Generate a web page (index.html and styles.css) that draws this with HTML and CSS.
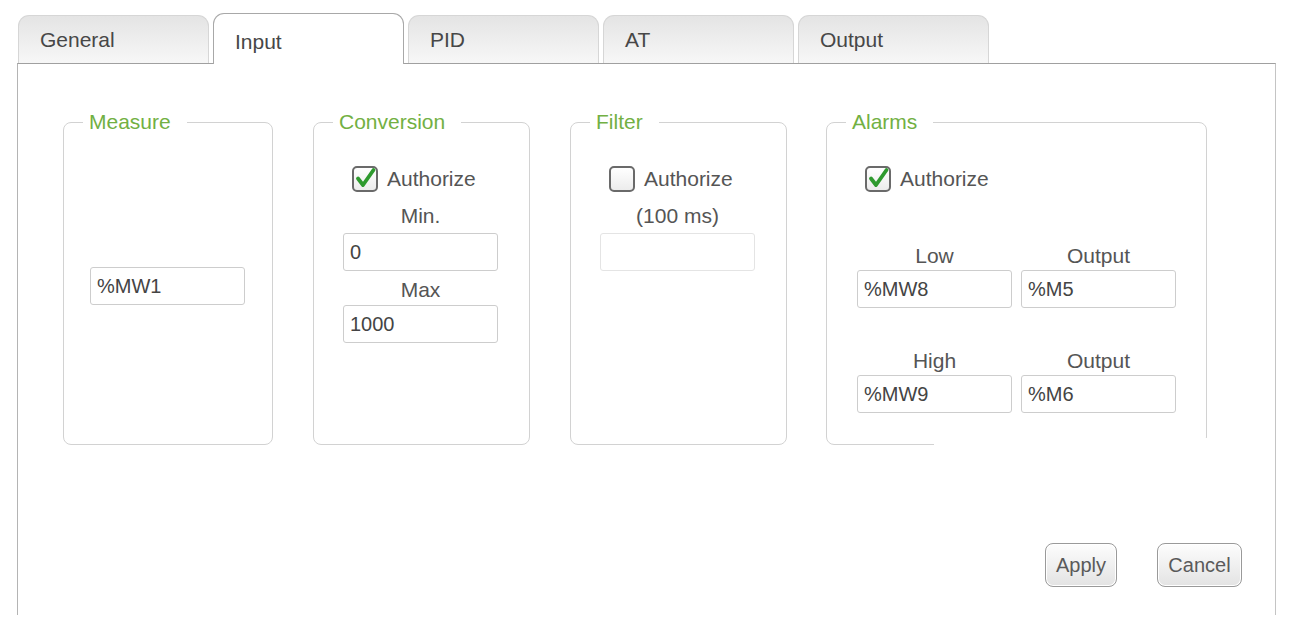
FILE: index.html
```html
<!DOCTYPE html>
<html>
<head>
<meta charset="utf-8">
<link rel="stylesheet" href="styles.css">
</head>
<body>
<div class="tabs">
  <div class="tab">General</div>
  <div class="tab active">Input</div>
  <div class="tab">PID</div>
  <div class="tab">AT</div>
  <div class="tab">Output</div>
</div>
<div class="panel">
  <div class="groups">
    <fieldset class="group measure">
      <legend>Measure</legend>
      <input class="field m-field" type="text" value="%MW1">
    </fieldset>
    <fieldset class="group conv">
      <legend>Conversion</legend>
      <label class="check-row">
        <span class="check on"><svg viewBox="0 0 26 26" width="26" height="26"><path d="M6 12.5 L11 19 L21.5 4" fill="none" stroke="#2e9a2e" stroke-width="3.8" stroke-linecap="round" stroke-linejoin="round"/></svg></span>
        <span>Authorize</span>
      </label>
      <div class="col">
        <div class="lbl lbl-first">Min.</div>
        <input class="field" type="text" value="0">
        <div class="lbl lbl-second">Max</div>
        <input class="field" type="text" value="1000">
      </div>
    </fieldset>
    <fieldset class="group filter">
      <legend>Filter</legend>
      <label class="check-row">
        <span class="check"></span>
        <span>Authorize</span>
      </label>
      <div class="col">
        <div class="lbl lbl-first">(100 ms)</div>
        <input class="field disabled" type="text" value="">
      </div>
    </fieldset>
    <fieldset class="group alarms">
      <legend>Alarms</legend>
      <label class="check-row">
        <span class="check on"><svg viewBox="0 0 26 26" width="26" height="26"><path d="M6 12.5 L11 19 L21.5 4" fill="none" stroke="#2e9a2e" stroke-width="3.8" stroke-linecap="round" stroke-linejoin="round"/></svg></span>
        <span>Authorize</span>
      </label>
      <div class="alarm-grid row1">
        <div class="lbl">Low</div>
        <div class="lbl">Output</div>
        <input class="field" type="text" value="%MW8">
        <input class="field" type="text" value="%M5">
      </div>
      <div class="alarm-grid row2">
        <div class="lbl">High</div>
        <div class="lbl">Output</div>
        <input class="field" type="text" value="%MW9">
        <input class="field" type="text" value="%M6">
      </div>
      <div class="mask"></div>
    </fieldset>
  </div>
  <div class="footer">
    <button class="btn apply">Apply</button>
    <button class="btn cancel">Cancel</button>
  </div>
</div>
</body>
</html>
```
FILE: styles.css
```css
html, body {
  margin: 0;
  padding: 0;
  background: #ffffff;
}
body {
  font-family: "Liberation Sans", Arial, sans-serif;
  color: #555555;
  font-size: 21px;
}
.tabs {
  display: flex;
  gap: 4px;
  padding-left: 18px;
  padding-top: 15px;
  height: 63px;
  box-sizing: border-box;
  align-items: flex-end;
  position: relative;
  z-index: 2;
}
.tab {
  width: 191px;
  height: 48px;
  box-sizing: border-box;
  border: 1px solid #d6d6d6;
  border-bottom: none;
  border-radius: 11px 11px 0 0;
  background: linear-gradient(#e4e4e4, #f7f7f7);
  color: #474747;
  padding-left: 21px;
  padding-top: 12px;
  line-height: 24px;
}
.tab.active {
  height: 51px;
  margin-bottom: -1px;
  background: #ffffff;
  border-color: #a8a8a8;
  padding-top: 16px;
}
.panel {
  margin-left: 17px;
  width: 1259px;
  height: 552px;
  box-sizing: border-box;
  border: 1px solid #a0a0a0;
  border-left-color: #b4b4b4;
  border-right-color: #c4c4c4;
  border-bottom: none;
  position: relative;
  z-index: 1;
}
.groups {
  display: flex;
  padding-top: 46px;
  padding-left: 45px;
}
.group {
  margin: 0 40px 0 0;
  padding: 0;
  border: 1px solid #d2d2d2;
  border-radius: 8px;
  height: 335px;
  box-sizing: border-box;
  display: flex;
  flex-direction: column;
  position: relative;
  min-width: 0;
}
.group legend {
  margin-left: 19px;
  padding: 0 16px 0 6px;
  color: #72b043;
  line-height: 24px;
  font-size: 21px;
}
.measure { width: 210px; }
.conv { width: 217px; }
.filter { width: 217px; margin-right: 39px; }
.alarms { width: 381px; margin-right: 0; }

.field {
  width: 155px;
  height: 38px;
  box-sizing: border-box;
  border: 1px solid #cdcdcd;
  border-radius: 3px;
  font-family: "Liberation Sans", Arial, sans-serif;
  font-size: 20px;
  color: #444444;
  padding: 0 0 0 6px;
  margin: 0;
  background: #ffffff;
  outline: none;
}
.field.disabled {
  border-color: #e4e4e4;
}
.m-field {
  margin-top: 133px;
  margin-left: 26px;
}
.check-row {
  display: flex;
  align-items: center;
  gap: 9px;
  margin-top: 32px;
  margin-left: 38px;
  height: 26px;
  line-height: 24px;
  color: #555555;
}
.check {
  width: 26px;
  height: 26px;
  box-sizing: border-box;
  border: 2px solid #6a6a6a;
  border-radius: 5px;
  background: linear-gradient(#ffffff, #ececec);
  display: flex;
  align-items: center;
  justify-content: center;
  overflow: visible;
}
.check svg {
  display: block;
  flex: none;
  overflow: visible;
}
.col {
  display: flex;
  flex-direction: column;
  width: 155px;
  margin-left: 29px;
}
.lbl {
  text-align: center;
  line-height: 24px;
  color: #555555;
}
.lbl-first {
  margin-top: 12px;
  margin-bottom: 5px;
}
.lbl-second {
  margin-top: 7px;
  margin-bottom: 3px;
}
.alarm-grid {
  display: grid;
  grid-template-columns: 155px 155px;
  column-gap: 9px;
  row-gap: 2px;
  margin-left: 30px;
}
.row1 { margin-top: 52px; }
.row2 { margin-top: 41px; }
.mask {
  position: absolute;
  left: 107px;
  right: -6px;
  bottom: -6px;
  height: 12px;
  background: #ffffff;
}
.footer {
  display: flex;
  justify-content: flex-end;
  gap: 40px;
  padding-right: 33px;
  margin-top: 98px;
}
.btn {
  height: 44px;
  box-sizing: border-box;
  border: 1px solid #9a9a9a;
  border-radius: 8px;
  background: linear-gradient(#fdfdfd, #e3e3e3);
  font-family: "Liberation Sans", Arial, sans-serif;
  font-size: 20px;
  color: #5a5a5a;
  padding: 0;
  box-shadow: inset 0 0 0 1px #ffffff;
}
.apply { width: 72px; }
.cancel { width: 85px; }
```
